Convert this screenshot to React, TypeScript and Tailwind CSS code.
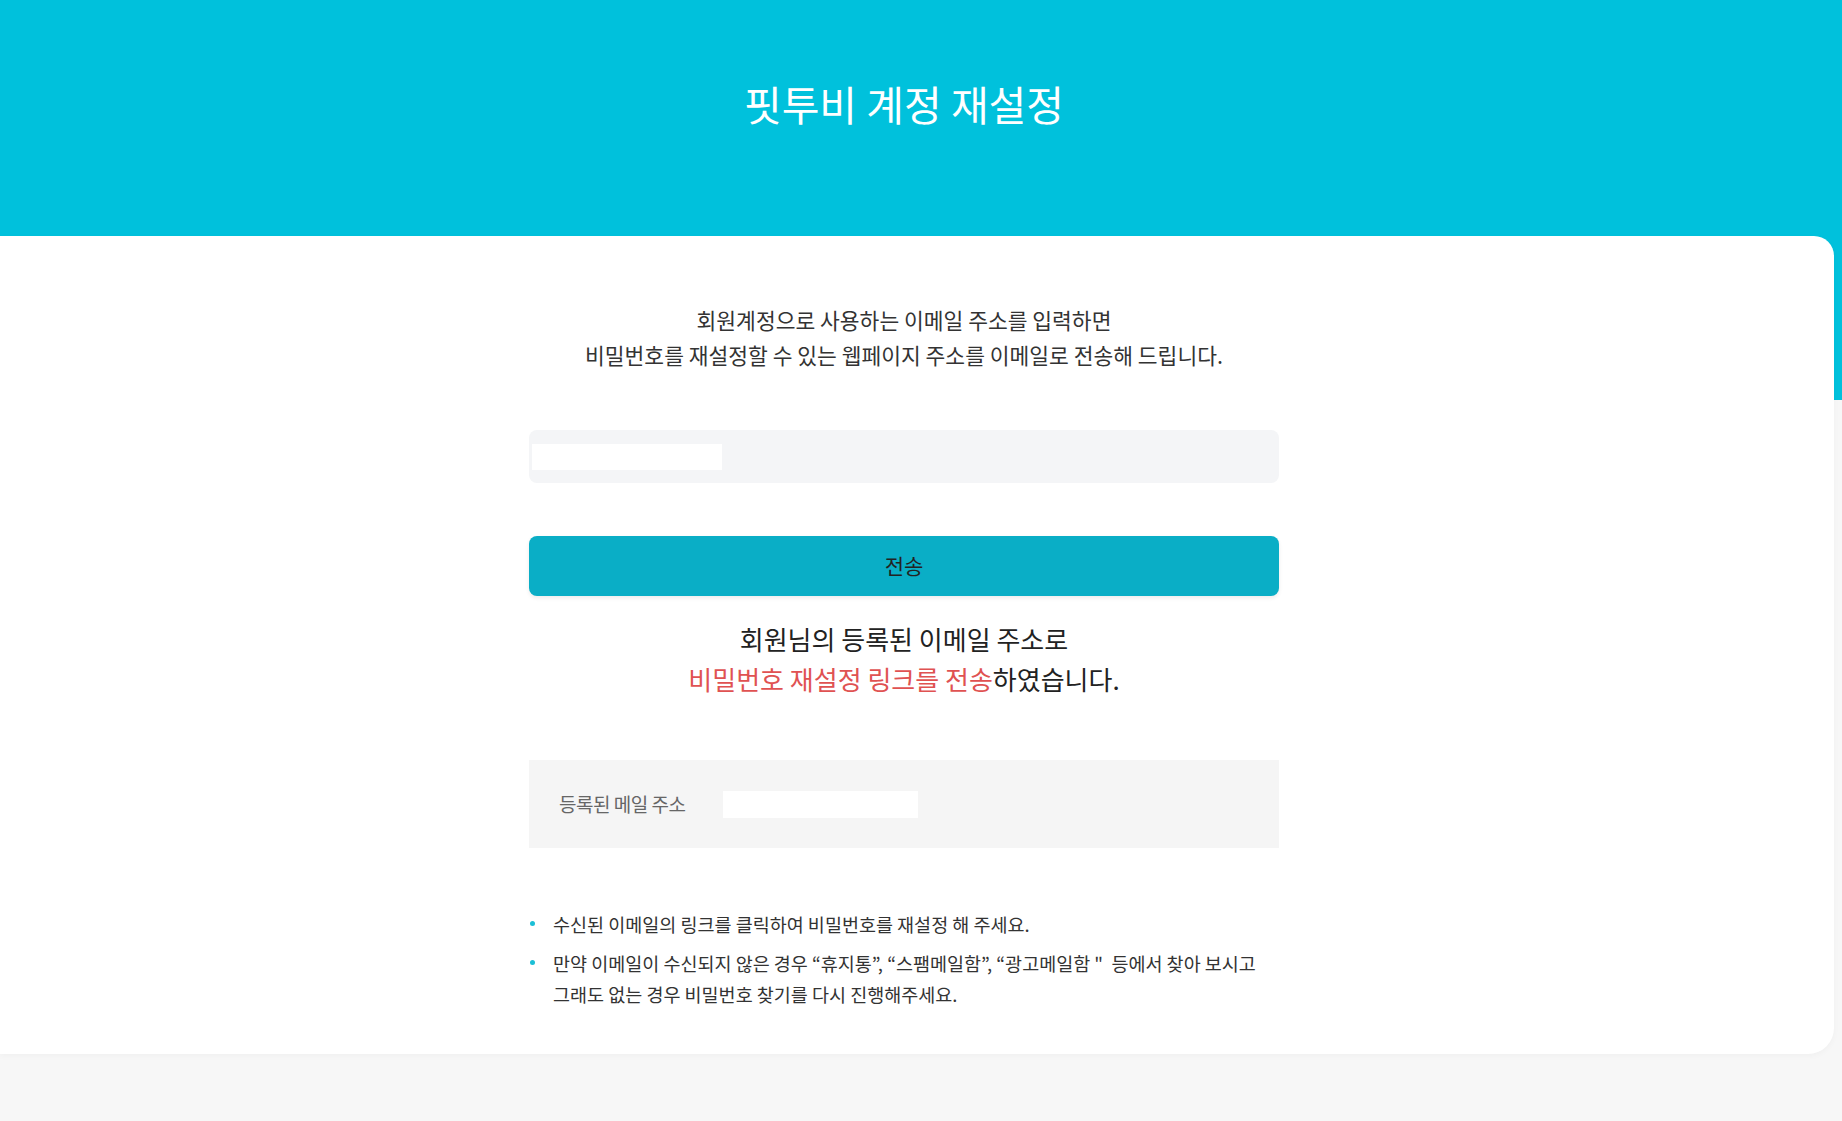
export default function App() {
  const font = { fontFamily: '"Noto Sans CJK KR", "Noto Sans", sans-serif' };

  return (
    <div className="min-h-screen bg-[#f7f7f7]" style={font}>
      {/* Header */}
      <div className="flex h-[400px] justify-center bg-[#00c1dc] pr-[34px] pt-[76px]">
        <h1 className="h-[54px] text-[41px] font-normal leading-[54px] text-white">
          핏투비 계정 재설정
        </h1>
      </div>

      {/* Card */}
      <div className="relative -mt-[164px] mr-[8px] flex flex-col items-center rounded-tr-[20px] rounded-br-[26px] bg-white pr-[26px] pt-[66px] pb-[44px] shadow-[0_2px_6px_rgba(0,0,0,0.03)]">
        <p className="text-center text-[21.5px] leading-[35px] text-[#333]">
          회원계정으로 사용하는 이메일 주소를 입력하면
          <br />
          비밀번호를 재설정할 수 있는 웹페이지 주소를 이메일로 전송해 드립니다.
        </p>

        <div className="mt-[58px] flex h-[53px] w-[750px] items-center rounded-[8px] bg-[#f4f5f7] pl-[3px]">
          <div className="h-[26px] w-[190px] bg-white" />
        </div>

        <button className="mt-[53px] h-[60px] w-[750px] rounded-[8px] bg-[#0aaec6] text-[21px] text-[#222] shadow-[0_2px_4px_rgba(0,0,0,0.08)]">
          전송
        </button>

        <p className="mt-[23px] text-center text-[26px] leading-[40px] text-[#222]">
          회원님의 등록된 이메일 주소로
          <br />
          <span className="text-[#e05252]">비밀번호 재설정 링크를 전송</span>
          하였습니다.
        </p>

        <div className="mt-[61px] flex h-[88px] w-[750px] items-center bg-[#f5f5f5] pl-[30px]">
          <span className="text-[19px] tracking-[-0.5px] text-[#666]">등록된 메일 주소</span>
          <div className="ml-[38px] h-[27px] w-[195px] bg-white" />
        </div>

        <ul className="mt-[61px] flex w-[750px] flex-col gap-[8px] text-[18.5px] leading-[31px] text-[#333]">
          <li className="flex">
            <span className="mt-[12px] ml-[1px] mr-[18px] h-[5px] w-[5px] shrink-0 rounded-full bg-[#1bbfd6]" />
            <span>수신된 이메일의 링크를 클릭하여 비밀번호를 재설정 해 주세요.</span>
          </li>
          <li className="flex">
            <span className="mt-[12px] ml-[1px] mr-[18px] h-[5px] w-[5px] shrink-0 rounded-full bg-[#1bbfd6]" />
            <span>
              {"만약 이메일이 수신되지 않은 경우 “휴지통”, “스팸메일함”, “광고메일함 \"\u00a0 등에서 찾아 보시고"}
              <br />
              그래도 없는 경우 비밀번호 찾기를 다시 진행해주세요.
            </span>
          </li>
        </ul>
      </div>
    </div>
  );
}
